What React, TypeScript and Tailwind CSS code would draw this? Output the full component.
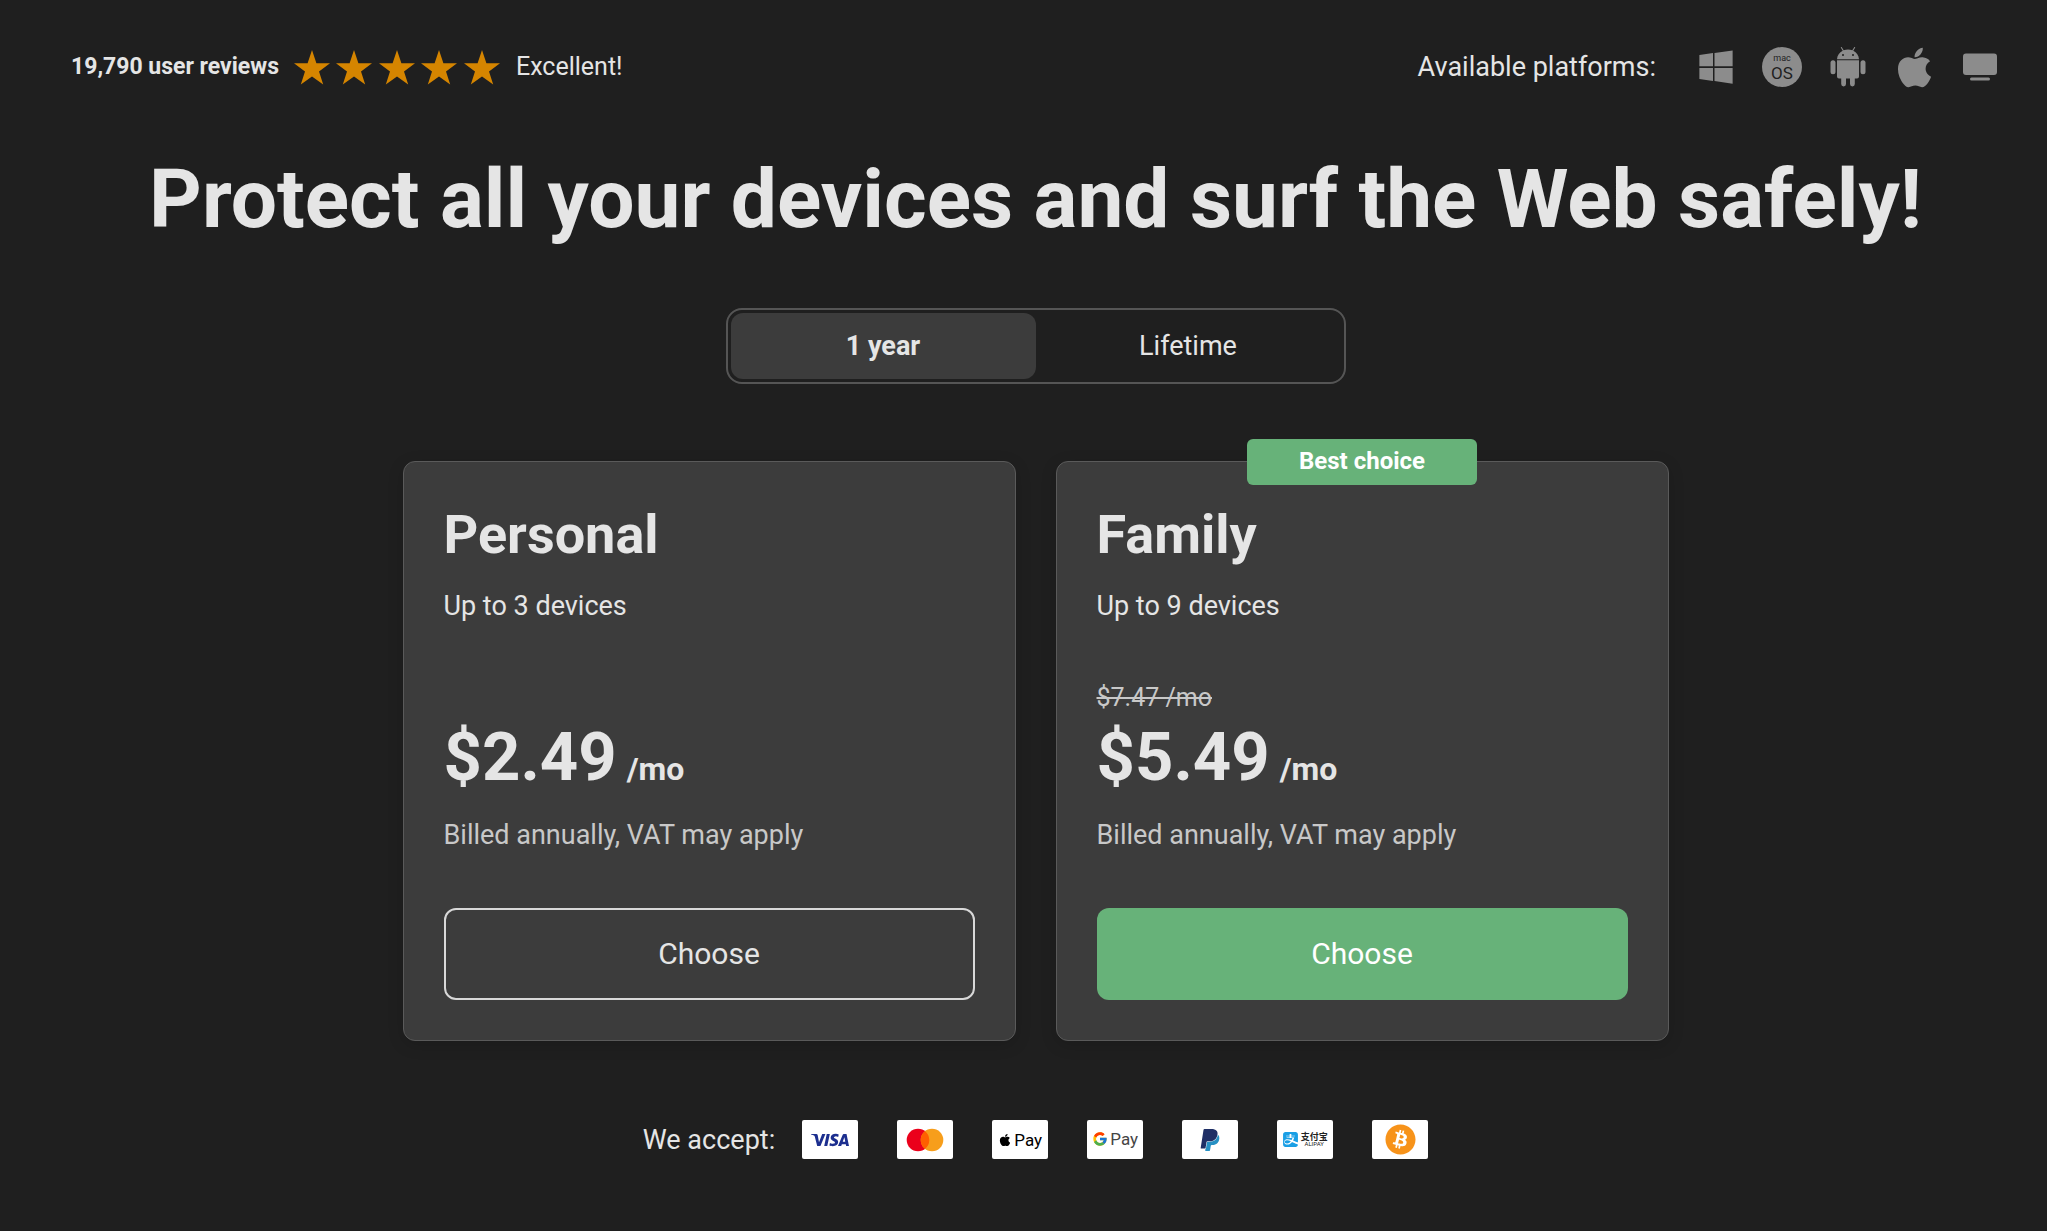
import { useState } from "react";
import { FaApple, FaBitcoin, FaWindows } from "react-icons/fa";
import { FcGoogle } from "react-icons/fc";
import { SiAlipay, SiVisa } from "react-icons/si";

type Plan = {
  name: string;
  devices: string;
  oldPrice?: string;
  price: string;
  best?: boolean;
};

const plans: Plan[] = [
  { name: "Personal", devices: "Up to 3 devices", price: "$2.49" },
  { name: "Family", devices: "Up to 9 devices", oldPrice: "$7.47 /mo", price: "$5.49", best: true },
];

const periods = ["1 year", "Lifetime"];

function Star() {
  return (
    <svg viewBox="0 0 36 35" className="h-[35px] w-9 fill-[#d58500]" aria-hidden="true">
      <path d="M18 0l4.400 13.300H36L25 21.600 29.200 34.600 18 26.600 6.800 34.600 11 21.600 0 13.300h13.600z" />
    </svg>
  );
}

function MacOs() {
  return (
    <span className="flex size-10 flex-col items-center justify-center rounded-full bg-[#8c8c8c] text-[#1f1f1f]">
      <span className="text-[9px] leading-[11px]">mac</span>
      <span className="text-[17px] leading-[18px]">OS</span>
    </span>
  );
}

function Android() {
  return (
    <svg viewBox="0 0 36 40" className="h-10 w-9" fill="currentColor" aria-hidden="true">
      <path d="M7 12.300C7.200 8.300 9.400 5.300 12.700 3.700L10.900.7a.5.5 0 0 1 .9-.5l1.900 3.100a13 13 0 0 1 8.600 0L24.200.2a.5.5 0 0 1 .9.500L23.300 3.700C26.600 5.300 28.800 8.300 29 12.300z" />
      <circle cx="13" cy="8" r="1" className="fill-[#1f1f1f]" />
      <circle cx="23" cy="8" r="1" className="fill-[#1f1f1f]" />
      <rect x="0.500" y="13.300" width="5" height="14" rx="2.500" />
      <rect x="30.500" y="13.300" width="5" height="14" rx="2.500" />
      <path d="M7 13.300h22v16.200a2 2 0 0 1-2 2h-2.200v5.500a2.400 2.400 0 0 1-4.800 0v-5.500h-4v5.500a2.400 2.400 0 0 1-4.800 0v-5.500H9a2 2 0 0 1-2-2z" />
    </svg>
  );
}

function Tv() {
  return (
    <svg viewBox="0 0 34 40" className="h-10 w-[34px]" fill="currentColor" aria-hidden="true">
      <rect x="0" y="6.500" width="34" height="21.500" rx="3" />
      <rect x="7" y="30.500" width="20" height="3" rx="1.500" />
    </svg>
  );
}

function Mastercard() {
  return (
    <svg viewBox="0 0 38 24" className="h-6 w-[38px]" aria-hidden="true">
      <circle cx="12" cy="12" r="11.300" fill="#eb001b" />
      <circle cx="26" cy="12" r="11.300" fill="#f79e1b" />
      <path d="M19 3.130a11.300 11.300 0 0 1 0 17.740a11.300 11.300 0 0 1 0-17.740z" fill="#ff5f00" />
    </svg>
  );
}

function PayPal() {
  return (
    <svg viewBox="0 0 24 24" className="size-[22px]" aria-hidden="true">
      <path
        fill="#2790c3"
        d="M21.222 6.917a3.350 3.350 0 0 0-.607-.541c-.013.076-.026.175-.041.254-.93 4.778-4.005 7.201-9.138 7.201h-2.190a.563.563 0 0 0-.556.479l-1.187 7.527h-.506l-.24 1.516a.56.56 0 0 0 .554.647h3.882c.46 0 .85-.334.922-.788.06-.26.76-4.852.816-5.090a.932.932 0 0 1 .923-.788h.58c3.760 0 6.705-1.528 7.565-5.946.36-1.847.174-3.388-.777-4.471z"
      />
      <path
        fill="#1f2f66"
        d="M7.076 21.337H2.470a.641.641 0 0 1-.633-.74L4.944.901C5.026.382 5.474 0 5.998 0h7.460c2.570 0 4.578.543 5.690 1.810 1.010 1.150 1.304 2.420 1.012 4.287-.023.143-.047.288-.077.437-.983 5.050-4.349 6.797-8.647 6.797h-2.190c-.524 0-.968.382-1.050.9l-1.120 7.106z"
      />
    </svg>
  );
}

const payments = [
  { label: "Visa", mark: <SiVisa className="size-[38px] text-[#1c2f8f]" /> },
  { label: "Mastercard", mark: <Mastercard /> },
  {
    label: "Apple Pay",
    mark: (
      <span className="flex items-center gap-[2px] text-[17px] leading-5 text-black">
        <FaApple className="size-[14px]" />
        Pay
      </span>
    ),
  },
  {
    label: "Google Pay",
    mark: (
      <span className="flex items-center gap-[2px] pb-[2px] text-[17px] leading-5 text-[#454545]">
        <FcGoogle className="size-4" />
        Pay
      </span>
    ),
  },
  { label: "PayPal", mark: <PayPal /> },
  {
    label: "Alipay",
    mark: (
      <span className="flex items-center gap-[3px] text-[#222]">
        <SiAlipay className="size-[15px] text-[#1a9fe5]" />
        <span className="flex flex-col items-center">
          <span className="font-['Noto_Sans_CJK_SC',sans-serif] text-[9px] leading-[9px] font-bold">支付宝</span>
          <span className="text-[6px] leading-[6px]">ALIPAY</span>
        </span>
      </span>
    ),
  },
  { label: "Bitcoin", mark: <FaBitcoin className="size-[31px] text-[#f7931a]" /> },
];

function PlanCard({ plan }: { plan: Plan }) {
  return (
    <section className="relative flex flex-1 flex-col rounded-xl border border-[#5a5a5a] bg-[#3c3c3c] p-10 shadow-[0_4px_16px_rgba(0,0,0,0.15)]">
      {plan.best && (
        <span className="absolute -top-[23px] left-1/2 flex h-[46px] w-[230px] -translate-x-1/2 items-center justify-center rounded-md bg-[#67b279] pb-[2px] text-2xl font-bold text-white">
          Best choice
        </span>
      )}
      <h2 className="text-[54px] leading-[66px] font-bold">{plan.name}</h2>
      <p className="mt-5 text-[27px] leading-9">{plan.devices}</p>
      <p className="mt-14 h-9 text-[25px] leading-9 text-[#c8c8c8]">{plan.oldPrice && <s>{plan.oldPrice}</s>}</p>
      <p className="mt-[3px] flex items-baseline gap-[10px] font-bold">
        <span className="text-[67px] leading-[76px]">{plan.price}</span>
        <span className="text-[32px] leading-9">/mo</span>
      </p>
      <p className="mt-[22px] text-[27px] leading-9 text-[#c8c8c8]">Billed annually, VAT may apply</p>
      <button
        type="button"
        className={
          plan.best
            ? "mt-[55px] h-[92px] rounded-xl bg-[#67b279] text-3xl text-white"
            : "mt-[55px] h-[92px] rounded-xl border-2 border-[#d8d8d8] text-3xl"
        }
      >
        Choose
      </button>
    </section>
  );
}

export default function App() {
  const [period, setPeriod] = useState(periods[0]);

  return (
    <main className="flex min-h-screen flex-col items-center bg-[#1f1f1f] pt-[47px] pr-[47px] pb-12 pl-[71px] font-[Roboto,sans-serif] text-[#e5e5e5]">
      <header className="flex w-full items-center justify-between">
        <div className="flex items-center text-[23px] leading-10">
          <strong className="font-bold">19,790 user reviews</strong>
          <div className="ml-[15px] flex w-[206px] justify-between" role="img" aria-label="5 out of 5 stars">
            <Star />
            <Star />
            <Star />
            <Star />
            <Star />
          </div>
          <span className="ml-4 text-[25px]">Excellent!</span>
        </div>
        <div className="flex items-center">
          <span className="text-[27px] leading-10">Available platforms:</span>
          <ul className="ml-10 flex items-center gap-[26px] text-[#8c8c8c]">
            <li className="flex size-10 items-center justify-center" aria-label="Windows">
              <FaWindows className="size-[38px]" />
            </li>
            <li className="flex size-10 items-center justify-center" aria-label="macOS">
              <MacOs />
            </li>
            <li className="flex size-10 items-center justify-center" aria-label="Android">
              <Android />
            </li>
            <li className="flex size-10 items-center justify-center" aria-label="iOS">
              <FaApple className="size-[45px] shrink-0" />
            </li>
            <li className="flex size-10 items-center justify-center" aria-label="TV">
              <Tv />
            </li>
          </ul>
        </div>
      </header>

      <h1 className="mt-16 text-center text-[82px] leading-[96px] font-bold">
        Protect all your devices and surf the Web safely!
      </h1>

      <div className="mt-[61px] flex h-[76px] w-full max-w-[620px] rounded-2xl border-2 border-[#555] p-[3px]" role="group" aria-label="Subscription period">
        {periods.map((item) => (
          <button
            key={item}
            type="button"
            aria-pressed={item === period}
            onClick={() => setPeriod(item)}
            className={
              item === period
                ? "flex-1 rounded-xl bg-[#3c3c3c] text-[27px] font-bold"
                : "flex-1 rounded-xl text-[27px]"
            }
          >
            {item}
          </button>
        ))}
      </div>

      <div className="mt-[77px] flex w-full max-w-[1266px] gap-10">
        {plans.map((plan) => (
          <PlanCard key={plan.name} plan={plan} />
        ))}
      </div>

      <footer className="mt-[79px] flex items-center">
        <span className="text-[27px] leading-9">We accept:</span>
        <ul className="ml-[27px] flex gap-[39px]">
          {payments.map(({ label, mark }) => (
            <li
              key={label}
              aria-label={label}
              className="flex h-[39px] w-14 items-center justify-center overflow-hidden rounded-xs bg-white"
            >
              {mark}
            </li>
          ))}
        </ul>
      </footer>
    </main>
  );
}
